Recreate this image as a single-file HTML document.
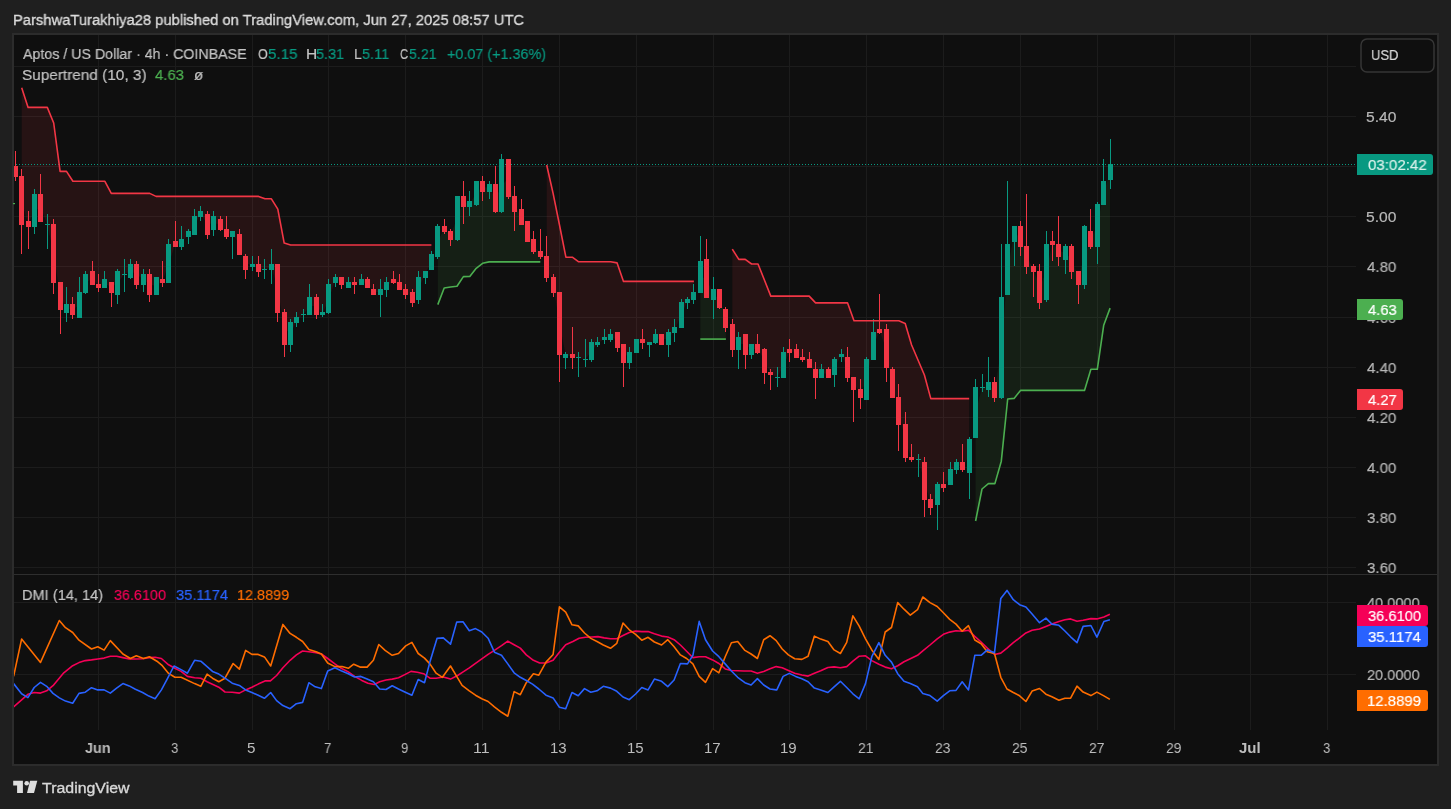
<!DOCTYPE html>
<html><head><meta charset="utf-8"><style>
*{margin:0;padding:0;box-sizing:border-box}
html,body{width:1451px;height:809px;overflow:hidden;background:#1f1f1f;font-family:"Liberation Sans",sans-serif}
.t{position:absolute;line-height:1;white-space:nowrap;transform-origin:0 0;will-change:transform}
.box{position:absolute;left:1357px;border-radius:0 3px 3px 0}
</style></head><body>
<svg width="1451" height="809" style="position:absolute;left:0;top:0">
<rect x="12" y="33" width="1427" height="733" fill="#2c2c2c"/>
<rect x="14" y="35" width="1423" height="729" fill="#0f0f0f"/>
<svg x="14" y="35" width="1342" height="695" viewBox="14 35 1342 695" overflow="hidden">
<rect x="14" y="66" width="1342" height="1" fill="#1c1c1c"/>
<rect x="14" y="116" width="1342" height="1" fill="#1c1c1c"/>
<rect x="14" y="166" width="1342" height="1" fill="#1c1c1c"/>
<rect x="14" y="216" width="1342" height="1" fill="#1c1c1c"/>
<rect x="14" y="266" width="1342" height="1" fill="#1c1c1c"/>
<rect x="14" y="317" width="1342" height="1" fill="#1c1c1c"/>
<rect x="14" y="367" width="1342" height="1" fill="#1c1c1c"/>
<rect x="14" y="417" width="1342" height="1" fill="#1c1c1c"/>
<rect x="14" y="467" width="1342" height="1" fill="#1c1c1c"/>
<rect x="14" y="517" width="1342" height="1" fill="#1c1c1c"/>
<rect x="14" y="567" width="1342" height="1" fill="#1c1c1c"/>
<rect x="14" y="602" width="1342" height="1" fill="#1c1c1c"/>
<rect x="14" y="674" width="1342" height="1" fill="#1c1c1c"/>
<rect x="98" y="35" width="1" height="695" fill="#1c1c1c"/>
<rect x="175" y="35" width="1" height="695" fill="#1c1c1c"/>
<rect x="252" y="35" width="1" height="695" fill="#1c1c1c"/>
<rect x="328" y="35" width="1" height="695" fill="#1c1c1c"/>
<rect x="405" y="35" width="1" height="695" fill="#1c1c1c"/>
<rect x="482" y="35" width="1" height="695" fill="#1c1c1c"/>
<rect x="559" y="35" width="1" height="695" fill="#1c1c1c"/>
<rect x="636" y="35" width="1" height="695" fill="#1c1c1c"/>
<rect x="713" y="35" width="1" height="695" fill="#1c1c1c"/>
<rect x="789" y="35" width="1" height="695" fill="#1c1c1c"/>
<rect x="866" y="35" width="1" height="695" fill="#1c1c1c"/>
<rect x="943" y="35" width="1" height="695" fill="#1c1c1c"/>
<rect x="1020" y="35" width="1" height="695" fill="#1c1c1c"/>
<rect x="1097" y="35" width="1" height="695" fill="#1c1c1c"/>
<rect x="1174" y="35" width="1" height="695" fill="#1c1c1c"/>
<rect x="1250" y="35" width="1" height="695" fill="#1c1c1c"/>
<rect x="1327" y="35" width="1" height="695" fill="#1c1c1c"/>
<polygon points="21.7,87.7 28.1,107.4 34.5,107.4 40.9,107.4 47.3,107.4 53.7,123.0 60.1,171.4 66.5,171.4 72.9,181.3 79.3,181.3 85.7,181.3 92.1,181.3 98.5,181.3 104.9,181.3 111.3,193.4 117.7,193.4 124.1,193.4 130.5,193.4 136.9,193.4 143.3,193.4 149.7,193.4 156.1,196.4 162.5,196.4 168.9,196.4 175.3,196.4 181.7,196.4 188.1,196.4 194.5,196.4 200.9,196.4 207.3,196.4 213.7,196.4 220.1,196.4 226.6,196.4 233.0,196.4 239.4,196.4 245.8,196.4 252.2,196.4 258.6,196.4 265.0,198.8 271.4,198.8 277.8,209.2 284.2,243.1 290.6,245.0 297.0,245.0 303.4,245.0 309.8,245.0 316.2,245.0 322.6,245.0 329.0,245.0 335.4,245.0 341.8,245.0 348.2,245.0 354.6,245.0 361.0,245.0 367.4,245.0 373.8,245.0 380.2,245.0 386.6,245.0 393.0,245.0 399.4,245.0 405.8,245.0 412.2,245.0 418.6,245.0 425.0,245.0 431.4,245.0 431.4,262.0 425.0,274.5 418.6,288.5 412.2,297.5 405.8,292.0 399.4,286.0 393.0,281.0 386.6,286.0 380.2,292.0 373.8,292.0 367.4,283.5 361.0,282.0 354.6,283.5 348.2,285.0 341.8,281.0 335.4,280.0 329.0,298.5 322.6,313.5 316.2,306.0 309.8,306.0 303.4,314.5 297.0,320.0 290.6,333.5 284.2,328.5 277.8,288.5 271.4,267.0 265.0,269.5 258.6,268.0 252.2,265.5 245.8,263.0 239.4,244.5 233.0,234.0 226.6,233.0 220.1,224.5 213.7,223.0 207.3,224.5 200.9,214.0 194.5,225.5 188.1,234.0 181.7,243.0 175.3,244.0 168.9,263.5 162.5,281.0 156.1,286.0 149.7,284.5 143.3,279.5 136.9,274.5 130.5,271.0 124.1,274.5 117.7,283.0 111.3,287.5 104.9,283.5 98.5,286.0 92.1,278.0 85.7,283.5 79.3,305.0 72.9,309.5 66.5,308.5 60.1,296.0 53.7,253.5 47.3,224.5 40.9,208.0 34.5,210.5 28.1,224.0 21.7,200.5" fill="rgba(242,54,69,0.10)"/>
<polygon points="437.8,304.6 444.2,288.0 450.6,287.0 457.0,286.2 463.4,276.6 469.8,276.4 476.2,268.3 482.6,263.3 489.1,261.9 495.5,261.9 501.9,261.9 508.3,261.9 514.7,261.9 521.1,261.9 527.5,261.9 533.9,261.9 540.3,261.9 540.3,254.0 533.9,245.5 527.5,231.5 521.1,217.0 514.7,204.0 508.3,178.0 501.9,185.5 495.5,198.0 489.1,188.0 482.6,186.5 476.2,193.0 469.8,204.0 463.4,201.5 457.0,218.0 450.6,235.5 444.2,229.0 437.8,241.5" fill="rgba(76,175,80,0.10)"/>
<polygon points="546.7,165.0 553.1,193.4 559.5,225.0 565.9,257.2 572.3,257.2 578.7,261.8 585.1,261.8 591.5,261.8 597.9,261.8 604.3,261.8 610.7,261.8 617.1,262.9 623.5,281.4 629.9,281.4 636.3,281.4 642.7,281.4 649.1,281.4 655.5,281.4 661.9,281.4 668.3,281.4 674.7,281.4 681.1,281.4 687.5,281.4 693.9,281.4 693.9,296.0 687.5,301.0 681.1,315.0 674.7,330.0 668.3,338.5 661.9,339.5 655.5,338.5 649.1,343.5 642.7,341.0 636.3,346.0 629.9,357.5 623.5,353.5 617.1,340.0 610.7,337.0 604.3,338.5 597.9,343.5 591.5,351.0 585.1,359.5 578.7,357.5 572.3,356.0 565.9,356.0 559.5,323.5 553.1,285.0 546.7,267.0" fill="rgba(242,54,69,0.10)"/>
<polygon points="700.3,339.1 706.7,339.1 713.1,339.1 719.5,339.1 725.9,339.1 725.9,318.5 719.5,298.5 713.1,294.5 706.7,278.5 700.3,277.0" fill="rgba(76,175,80,0.10)"/>
<polygon points="732.3,249.1 738.8,259.4 745.2,259.4 751.6,264.0 758.0,264.0 764.4,280.0 770.8,296.1 777.2,296.1 783.6,296.1 790.0,296.1 796.4,296.1 802.8,296.1 809.2,296.1 815.6,302.9 822.0,302.9 828.4,302.9 834.8,302.9 841.2,302.9 847.6,302.9 854.0,320.8 860.4,320.8 866.8,320.8 873.2,320.8 879.6,320.8 886.0,320.8 892.4,320.8 898.8,320.8 905.2,323.5 911.6,345.0 918.0,360.0 924.4,375.0 930.8,398.6 937.2,398.6 943.6,398.6 950.0,398.6 956.4,398.6 962.8,398.6 969.2,398.6 969.2,456.0 962.8,466.0 956.4,466.0 950.0,477.0 943.6,486.0 937.2,494.5 930.8,503.5 924.4,481.0 918.0,459.5 911.6,458.5 905.2,441.0 898.8,411.0 892.4,383.5 886.0,348.5 879.6,331.0 873.2,346.0 866.8,379.5 860.4,393.5 854.0,383.5 847.6,367.5 841.2,355.5 834.8,367.0 828.4,373.5 822.0,373.5 815.6,373.5 809.2,363.5 802.8,358.5 796.4,353.5 790.0,351.0 783.6,365.0 777.2,377.5 770.8,373.5 764.4,361.0 758.0,348.5 751.6,349.5 745.2,344.5 738.8,343.5 732.3,337.0" fill="rgba(242,54,69,0.10)"/>
<polygon points="975.6,521.0 982.0,489.0 988.4,483.6 994.9,483.6 1001.3,461.2 1007.7,399.0 1014.1,398.4 1020.5,390.4 1026.9,390.4 1033.3,390.4 1039.7,390.4 1046.1,390.4 1052.5,390.4 1058.9,390.4 1065.3,390.4 1071.7,390.4 1078.1,390.4 1084.5,390.4 1090.9,369.3 1097.3,369.3 1103.7,325.3 1110.1,308.1 1110.1,172.0 1103.7,193.0 1097.3,225.5 1090.9,239.0 1084.5,255.5 1078.1,278.0 1071.7,259.0 1065.3,253.0 1058.9,250.5 1052.5,243.0 1046.1,272.0 1039.7,287.0 1033.3,269.0 1026.9,256.5 1020.5,236.5 1014.1,234.0 1007.7,269.5 1001.3,347.5 994.9,390.0 988.4,386.0 982.0,387.5 975.6,412.5" fill="rgba(76,175,80,0.10)"/>
<defs><pattern id="dots" x="1" y="0" width="3" height="10" patternUnits="userSpaceOnUse"><rect x="0" y="0" width="1" height="10" fill="#089981"/></pattern></defs><rect x="14" y="164" width="1342" height="1" fill="url(#dots)"/>
<rect x="15" y="151" width="1" height="30" fill="#f23645"/>
<rect x="13" y="166" width="5" height="11" fill="#f23645"/>
<rect x="21" y="169" width="1" height="85" fill="#f23645"/>
<rect x="19" y="176" width="5" height="49" fill="#f23645"/>
<rect x="28" y="211" width="1" height="38" fill="#f23645"/>
<rect x="26" y="221" width="5" height="6" fill="#f23645"/>
<rect x="34" y="189" width="1" height="45" fill="#089981"/>
<rect x="32" y="194" width="5" height="33" fill="#089981"/>
<rect x="40" y="174" width="1" height="48" fill="#f23645"/>
<rect x="38" y="194" width="5" height="28" fill="#f23645"/>
<rect x="47" y="214" width="1" height="35" fill="#089981"/>
<rect x="45" y="224" width="5" height="1" fill="#089981"/>
<rect x="53" y="219" width="1" height="75" fill="#f23645"/>
<rect x="51" y="224" width="5" height="59" fill="#f23645"/>
<rect x="60" y="282" width="1" height="52" fill="#f23645"/>
<rect x="58" y="282" width="5" height="28" fill="#f23645"/>
<rect x="66" y="287" width="1" height="35" fill="#089981"/>
<rect x="64" y="304" width="5" height="9" fill="#089981"/>
<rect x="72" y="297" width="1" height="22" fill="#f23645"/>
<rect x="70" y="304" width="5" height="11" fill="#f23645"/>
<rect x="79" y="277" width="1" height="41" fill="#089981"/>
<rect x="77" y="292" width="5" height="26" fill="#089981"/>
<rect x="85" y="271" width="1" height="23" fill="#089981"/>
<rect x="83" y="274" width="5" height="19" fill="#089981"/>
<rect x="92" y="261" width="1" height="24" fill="#f23645"/>
<rect x="90" y="271" width="5" height="14" fill="#f23645"/>
<rect x="98" y="274" width="1" height="18" fill="#f23645"/>
<rect x="96" y="284" width="5" height="4" fill="#f23645"/>
<rect x="104" y="271" width="1" height="17" fill="#089981"/>
<rect x="102" y="279" width="5" height="9" fill="#089981"/>
<rect x="111" y="282" width="1" height="25" fill="#f23645"/>
<rect x="109" y="282" width="5" height="11" fill="#f23645"/>
<rect x="117" y="269" width="1" height="35" fill="#089981"/>
<rect x="115" y="271" width="5" height="24" fill="#089981"/>
<rect x="124" y="259" width="1" height="33" fill="#089981"/>
<rect x="122" y="274" width="5" height="1" fill="#089981"/>
<rect x="130" y="259" width="1" height="20" fill="#089981"/>
<rect x="128" y="264" width="5" height="14" fill="#089981"/>
<rect x="136" y="261" width="1" height="28" fill="#f23645"/>
<rect x="134" y="264" width="5" height="21" fill="#f23645"/>
<rect x="143" y="269" width="1" height="23" fill="#089981"/>
<rect x="141" y="274" width="5" height="11" fill="#089981"/>
<rect x="149" y="269" width="1" height="33" fill="#f23645"/>
<rect x="147" y="274" width="5" height="21" fill="#f23645"/>
<rect x="156" y="277" width="1" height="18" fill="#089981"/>
<rect x="154" y="277" width="5" height="18" fill="#089981"/>
<rect x="162" y="261" width="1" height="26" fill="#f23645"/>
<rect x="160" y="279" width="5" height="4" fill="#f23645"/>
<rect x="168" y="239" width="1" height="44" fill="#089981"/>
<rect x="166" y="244" width="5" height="39" fill="#089981"/>
<rect x="175" y="221" width="1" height="26" fill="#f23645"/>
<rect x="173" y="241" width="5" height="6" fill="#f23645"/>
<rect x="181" y="226" width="1" height="24" fill="#089981"/>
<rect x="179" y="239" width="5" height="8" fill="#089981"/>
<rect x="188" y="229" width="1" height="15" fill="#089981"/>
<rect x="186" y="231" width="5" height="6" fill="#089981"/>
<rect x="194" y="209" width="1" height="26" fill="#089981"/>
<rect x="192" y="216" width="5" height="19" fill="#089981"/>
<rect x="200" y="206" width="1" height="15" fill="#089981"/>
<rect x="198" y="211" width="5" height="6" fill="#089981"/>
<rect x="207" y="211" width="1" height="28" fill="#f23645"/>
<rect x="205" y="214" width="5" height="21" fill="#f23645"/>
<rect x="213" y="211" width="1" height="25" fill="#089981"/>
<rect x="211" y="216" width="5" height="14" fill="#089981"/>
<rect x="220" y="216" width="1" height="15" fill="#f23645"/>
<rect x="218" y="219" width="5" height="11" fill="#f23645"/>
<rect x="226" y="216" width="1" height="23" fill="#f23645"/>
<rect x="224" y="229" width="5" height="8" fill="#f23645"/>
<rect x="232" y="231" width="1" height="28" fill="#089981"/>
<rect x="230" y="231" width="5" height="6" fill="#089981"/>
<rect x="239" y="229" width="1" height="26" fill="#f23645"/>
<rect x="237" y="234" width="5" height="21" fill="#f23645"/>
<rect x="245" y="254" width="1" height="25" fill="#f23645"/>
<rect x="243" y="256" width="5" height="14" fill="#f23645"/>
<rect x="252" y="256" width="1" height="15" fill="#089981"/>
<rect x="250" y="264" width="5" height="3" fill="#089981"/>
<rect x="258" y="256" width="1" height="21" fill="#f23645"/>
<rect x="256" y="264" width="5" height="8" fill="#f23645"/>
<rect x="264" y="259" width="1" height="20" fill="#089981"/>
<rect x="262" y="269" width="5" height="1" fill="#089981"/>
<rect x="271" y="249" width="1" height="35" fill="#089981"/>
<rect x="269" y="264" width="5" height="6" fill="#089981"/>
<rect x="277" y="264" width="1" height="58" fill="#f23645"/>
<rect x="275" y="264" width="5" height="49" fill="#f23645"/>
<rect x="284" y="309" width="1" height="48" fill="#f23645"/>
<rect x="282" y="312" width="5" height="33" fill="#f23645"/>
<rect x="290" y="319" width="1" height="33" fill="#089981"/>
<rect x="288" y="322" width="5" height="23" fill="#089981"/>
<rect x="296" y="312" width="1" height="15" fill="#089981"/>
<rect x="294" y="317" width="5" height="6" fill="#089981"/>
<rect x="303" y="309" width="1" height="13" fill="#089981"/>
<rect x="301" y="314" width="5" height="1" fill="#089981"/>
<rect x="309" y="284" width="1" height="31" fill="#089981"/>
<rect x="307" y="297" width="5" height="18" fill="#089981"/>
<rect x="316" y="294" width="1" height="25" fill="#f23645"/>
<rect x="314" y="297" width="5" height="18" fill="#f23645"/>
<rect x="322" y="304" width="1" height="13" fill="#089981"/>
<rect x="320" y="312" width="5" height="3" fill="#089981"/>
<rect x="328" y="279" width="1" height="35" fill="#089981"/>
<rect x="326" y="284" width="5" height="29" fill="#089981"/>
<rect x="335" y="274" width="1" height="13" fill="#089981"/>
<rect x="333" y="277" width="5" height="6" fill="#089981"/>
<rect x="341" y="277" width="1" height="12" fill="#f23645"/>
<rect x="339" y="277" width="5" height="8" fill="#f23645"/>
<rect x="348" y="277" width="1" height="11" fill="#089981"/>
<rect x="346" y="282" width="5" height="6" fill="#089981"/>
<rect x="354" y="277" width="1" height="17" fill="#f23645"/>
<rect x="352" y="282" width="5" height="3" fill="#f23645"/>
<rect x="361" y="274" width="1" height="11" fill="#089981"/>
<rect x="359" y="279" width="5" height="6" fill="#089981"/>
<rect x="367" y="277" width="1" height="11" fill="#f23645"/>
<rect x="365" y="279" width="5" height="9" fill="#f23645"/>
<rect x="373" y="284" width="1" height="11" fill="#f23645"/>
<rect x="371" y="289" width="5" height="6" fill="#f23645"/>
<rect x="380" y="279" width="1" height="38" fill="#089981"/>
<rect x="378" y="289" width="5" height="6" fill="#089981"/>
<rect x="386" y="277" width="1" height="20" fill="#089981"/>
<rect x="384" y="282" width="5" height="8" fill="#089981"/>
<rect x="393" y="271" width="1" height="13" fill="#f23645"/>
<rect x="391" y="279" width="5" height="4" fill="#f23645"/>
<rect x="399" y="274" width="1" height="16" fill="#f23645"/>
<rect x="397" y="282" width="5" height="8" fill="#f23645"/>
<rect x="405" y="284" width="1" height="15" fill="#f23645"/>
<rect x="403" y="289" width="5" height="6" fill="#f23645"/>
<rect x="412" y="289" width="1" height="18" fill="#f23645"/>
<rect x="410" y="292" width="5" height="11" fill="#f23645"/>
<rect x="418" y="271" width="1" height="33" fill="#089981"/>
<rect x="416" y="277" width="5" height="23" fill="#089981"/>
<rect x="425" y="271" width="1" height="13" fill="#089981"/>
<rect x="423" y="271" width="5" height="7" fill="#089981"/>
<rect x="431" y="251" width="1" height="19" fill="#089981"/>
<rect x="429" y="254" width="5" height="16" fill="#089981"/>
<rect x="437" y="224" width="1" height="35" fill="#089981"/>
<rect x="435" y="226" width="5" height="31" fill="#089981"/>
<rect x="444" y="219" width="1" height="15" fill="#f23645"/>
<rect x="442" y="226" width="5" height="6" fill="#f23645"/>
<rect x="450" y="229" width="1" height="17" fill="#f23645"/>
<rect x="448" y="231" width="5" height="9" fill="#f23645"/>
<rect x="457" y="196" width="1" height="45" fill="#089981"/>
<rect x="455" y="196" width="5" height="44" fill="#089981"/>
<rect x="463" y="181" width="1" height="43" fill="#f23645"/>
<rect x="461" y="196" width="5" height="11" fill="#f23645"/>
<rect x="469" y="191" width="1" height="25" fill="#089981"/>
<rect x="467" y="201" width="5" height="6" fill="#089981"/>
<rect x="476" y="181" width="1" height="25" fill="#089981"/>
<rect x="474" y="181" width="5" height="24" fill="#089981"/>
<rect x="482" y="176" width="1" height="25" fill="#f23645"/>
<rect x="480" y="181" width="5" height="11" fill="#f23645"/>
<rect x="489" y="181" width="1" height="18" fill="#089981"/>
<rect x="487" y="184" width="5" height="8" fill="#089981"/>
<rect x="495" y="166" width="1" height="47" fill="#f23645"/>
<rect x="493" y="184" width="5" height="28" fill="#f23645"/>
<rect x="501" y="154" width="1" height="59" fill="#089981"/>
<rect x="499" y="159" width="5" height="53" fill="#089981"/>
<rect x="508" y="159" width="1" height="40" fill="#f23645"/>
<rect x="506" y="159" width="5" height="38" fill="#f23645"/>
<rect x="514" y="186" width="1" height="45" fill="#f23645"/>
<rect x="512" y="196" width="5" height="16" fill="#f23645"/>
<rect x="521" y="199" width="1" height="26" fill="#f23645"/>
<rect x="519" y="209" width="5" height="16" fill="#f23645"/>
<rect x="527" y="221" width="1" height="21" fill="#f23645"/>
<rect x="525" y="221" width="5" height="21" fill="#f23645"/>
<rect x="533" y="231" width="1" height="23" fill="#f23645"/>
<rect x="531" y="239" width="5" height="13" fill="#f23645"/>
<rect x="540" y="229" width="1" height="30" fill="#f23645"/>
<rect x="538" y="251" width="5" height="6" fill="#f23645"/>
<rect x="546" y="236" width="1" height="46" fill="#f23645"/>
<rect x="544" y="256" width="5" height="22" fill="#f23645"/>
<rect x="553" y="274" width="1" height="23" fill="#f23645"/>
<rect x="551" y="277" width="5" height="16" fill="#f23645"/>
<rect x="559" y="292" width="1" height="90" fill="#f23645"/>
<rect x="557" y="292" width="5" height="63" fill="#f23645"/>
<rect x="565" y="352" width="1" height="17" fill="#089981"/>
<rect x="563" y="354" width="5" height="4" fill="#089981"/>
<rect x="572" y="327" width="1" height="42" fill="#f23645"/>
<rect x="570" y="354" width="5" height="4" fill="#f23645"/>
<rect x="578" y="352" width="1" height="25" fill="#089981"/>
<rect x="576" y="357" width="5" height="1" fill="#089981"/>
<rect x="585" y="339" width="1" height="28" fill="#089981"/>
<rect x="583" y="359" width="5" height="1" fill="#089981"/>
<rect x="591" y="339" width="1" height="23" fill="#089981"/>
<rect x="589" y="342" width="5" height="18" fill="#089981"/>
<rect x="597" y="337" width="1" height="10" fill="#089981"/>
<rect x="595" y="342" width="5" height="3" fill="#089981"/>
<rect x="604" y="329" width="1" height="15" fill="#089981"/>
<rect x="602" y="337" width="5" height="3" fill="#089981"/>
<rect x="610" y="329" width="1" height="13" fill="#089981"/>
<rect x="608" y="334" width="5" height="6" fill="#089981"/>
<rect x="617" y="332" width="1" height="20" fill="#f23645"/>
<rect x="615" y="332" width="5" height="16" fill="#f23645"/>
<rect x="623" y="344" width="1" height="43" fill="#f23645"/>
<rect x="621" y="344" width="5" height="19" fill="#f23645"/>
<rect x="629" y="347" width="1" height="22" fill="#089981"/>
<rect x="627" y="352" width="5" height="11" fill="#089981"/>
<rect x="636" y="339" width="1" height="14" fill="#089981"/>
<rect x="634" y="339" width="5" height="14" fill="#089981"/>
<rect x="642" y="329" width="1" height="20" fill="#f23645"/>
<rect x="640" y="339" width="5" height="4" fill="#f23645"/>
<rect x="649" y="342" width="1" height="15" fill="#089981"/>
<rect x="647" y="342" width="5" height="3" fill="#089981"/>
<rect x="655" y="329" width="1" height="15" fill="#089981"/>
<rect x="653" y="334" width="5" height="9" fill="#089981"/>
<rect x="661" y="334" width="1" height="11" fill="#f23645"/>
<rect x="659" y="334" width="5" height="11" fill="#f23645"/>
<rect x="668" y="329" width="1" height="28" fill="#089981"/>
<rect x="666" y="332" width="5" height="13" fill="#089981"/>
<rect x="674" y="319" width="1" height="23" fill="#089981"/>
<rect x="672" y="327" width="5" height="6" fill="#089981"/>
<rect x="681" y="299" width="1" height="29" fill="#089981"/>
<rect x="679" y="302" width="5" height="26" fill="#089981"/>
<rect x="687" y="297" width="1" height="12" fill="#089981"/>
<rect x="685" y="299" width="5" height="4" fill="#089981"/>
<rect x="693" y="284" width="1" height="20" fill="#089981"/>
<rect x="691" y="292" width="5" height="8" fill="#089981"/>
<rect x="700" y="236" width="1" height="57" fill="#089981"/>
<rect x="698" y="261" width="5" height="32" fill="#089981"/>
<rect x="706" y="239" width="1" height="59" fill="#f23645"/>
<rect x="704" y="259" width="5" height="39" fill="#f23645"/>
<rect x="713" y="277" width="1" height="42" fill="#089981"/>
<rect x="711" y="289" width="5" height="11" fill="#089981"/>
<rect x="719" y="289" width="1" height="20" fill="#f23645"/>
<rect x="717" y="289" width="5" height="19" fill="#f23645"/>
<rect x="725" y="307" width="1" height="25" fill="#f23645"/>
<rect x="723" y="309" width="5" height="19" fill="#f23645"/>
<rect x="732" y="319" width="1" height="38" fill="#f23645"/>
<rect x="730" y="324" width="5" height="26" fill="#f23645"/>
<rect x="738" y="332" width="1" height="37" fill="#089981"/>
<rect x="736" y="337" width="5" height="13" fill="#089981"/>
<rect x="745" y="334" width="1" height="35" fill="#f23645"/>
<rect x="743" y="334" width="5" height="21" fill="#f23645"/>
<rect x="751" y="344" width="1" height="15" fill="#089981"/>
<rect x="749" y="344" width="5" height="11" fill="#089981"/>
<rect x="757" y="334" width="1" height="20" fill="#f23645"/>
<rect x="755" y="344" width="5" height="9" fill="#f23645"/>
<rect x="764" y="348" width="1" height="36" fill="#f23645"/>
<rect x="762" y="349" width="5" height="24" fill="#f23645"/>
<rect x="770" y="369" width="1" height="21" fill="#f23645"/>
<rect x="768" y="372" width="5" height="3" fill="#f23645"/>
<rect x="777" y="367" width="1" height="20" fill="#089981"/>
<rect x="775" y="377" width="5" height="1" fill="#089981"/>
<rect x="783" y="347" width="1" height="31" fill="#089981"/>
<rect x="781" y="352" width="5" height="26" fill="#089981"/>
<rect x="789" y="339" width="1" height="23" fill="#f23645"/>
<rect x="787" y="349" width="5" height="4" fill="#f23645"/>
<rect x="796" y="344" width="1" height="14" fill="#f23645"/>
<rect x="794" y="349" width="5" height="9" fill="#f23645"/>
<rect x="802" y="349" width="1" height="13" fill="#f23645"/>
<rect x="800" y="357" width="5" height="3" fill="#f23645"/>
<rect x="809" y="352" width="1" height="16" fill="#f23645"/>
<rect x="807" y="359" width="5" height="9" fill="#f23645"/>
<rect x="815" y="362" width="1" height="37" fill="#f23645"/>
<rect x="813" y="369" width="5" height="9" fill="#f23645"/>
<rect x="821" y="364" width="1" height="14" fill="#089981"/>
<rect x="819" y="369" width="5" height="9" fill="#089981"/>
<rect x="828" y="367" width="1" height="11" fill="#f23645"/>
<rect x="826" y="369" width="5" height="9" fill="#f23645"/>
<rect x="834" y="357" width="1" height="30" fill="#089981"/>
<rect x="832" y="359" width="5" height="16" fill="#089981"/>
<rect x="841" y="349" width="1" height="13" fill="#089981"/>
<rect x="839" y="354" width="5" height="3" fill="#089981"/>
<rect x="847" y="347" width="1" height="35" fill="#f23645"/>
<rect x="845" y="357" width="5" height="21" fill="#f23645"/>
<rect x="853" y="377" width="1" height="45" fill="#f23645"/>
<rect x="851" y="377" width="5" height="13" fill="#f23645"/>
<rect x="860" y="379" width="1" height="30" fill="#f23645"/>
<rect x="858" y="389" width="5" height="9" fill="#f23645"/>
<rect x="866" y="357" width="1" height="43" fill="#089981"/>
<rect x="864" y="359" width="5" height="41" fill="#089981"/>
<rect x="873" y="319" width="1" height="41" fill="#089981"/>
<rect x="871" y="332" width="5" height="28" fill="#089981"/>
<rect x="879" y="294" width="1" height="40" fill="#f23645"/>
<rect x="877" y="329" width="5" height="4" fill="#f23645"/>
<rect x="886" y="324" width="1" height="58" fill="#f23645"/>
<rect x="884" y="329" width="5" height="39" fill="#f23645"/>
<rect x="892" y="367" width="1" height="31" fill="#f23645"/>
<rect x="890" y="369" width="5" height="29" fill="#f23645"/>
<rect x="898" y="384" width="1" height="67" fill="#f23645"/>
<rect x="896" y="397" width="5" height="28" fill="#f23645"/>
<rect x="905" y="412" width="1" height="50" fill="#f23645"/>
<rect x="903" y="424" width="5" height="34" fill="#f23645"/>
<rect x="911" y="444" width="1" height="18" fill="#f23645"/>
<rect x="909" y="457" width="5" height="3" fill="#f23645"/>
<rect x="918" y="454" width="1" height="23" fill="#089981"/>
<rect x="916" y="459" width="5" height="1" fill="#089981"/>
<rect x="924" y="457" width="1" height="60" fill="#f23645"/>
<rect x="922" y="462" width="5" height="38" fill="#f23645"/>
<rect x="930" y="494" width="1" height="21" fill="#f23645"/>
<rect x="928" y="499" width="5" height="9" fill="#f23645"/>
<rect x="937" y="482" width="1" height="48" fill="#089981"/>
<rect x="935" y="484" width="5" height="21" fill="#089981"/>
<rect x="943" y="472" width="1" height="20" fill="#f23645"/>
<rect x="941" y="484" width="5" height="4" fill="#f23645"/>
<rect x="950" y="462" width="1" height="23" fill="#089981"/>
<rect x="948" y="469" width="5" height="16" fill="#089981"/>
<rect x="956" y="459" width="1" height="15" fill="#089981"/>
<rect x="954" y="462" width="5" height="8" fill="#089981"/>
<rect x="962" y="444" width="1" height="28" fill="#f23645"/>
<rect x="960" y="462" width="5" height="8" fill="#f23645"/>
<rect x="969" y="437" width="1" height="62" fill="#089981"/>
<rect x="967" y="439" width="5" height="34" fill="#089981"/>
<rect x="975" y="379" width="1" height="59" fill="#089981"/>
<rect x="973" y="387" width="5" height="51" fill="#089981"/>
<rect x="982" y="374" width="1" height="18" fill="#089981"/>
<rect x="980" y="387" width="5" height="1" fill="#089981"/>
<rect x="988" y="357" width="1" height="40" fill="#089981"/>
<rect x="986" y="382" width="5" height="8" fill="#089981"/>
<rect x="994" y="377" width="1" height="25" fill="#f23645"/>
<rect x="992" y="382" width="5" height="16" fill="#f23645"/>
<rect x="1001" y="244" width="1" height="155" fill="#089981"/>
<rect x="999" y="297" width="5" height="101" fill="#089981"/>
<rect x="1007" y="181" width="1" height="114" fill="#089981"/>
<rect x="1005" y="244" width="5" height="51" fill="#089981"/>
<rect x="1014" y="226" width="1" height="40" fill="#089981"/>
<rect x="1012" y="226" width="5" height="16" fill="#089981"/>
<rect x="1020" y="221" width="1" height="35" fill="#f23645"/>
<rect x="1018" y="226" width="5" height="21" fill="#f23645"/>
<rect x="1026" y="194" width="1" height="80" fill="#f23645"/>
<rect x="1024" y="246" width="5" height="21" fill="#f23645"/>
<rect x="1033" y="264" width="1" height="33" fill="#f23645"/>
<rect x="1031" y="266" width="5" height="6" fill="#f23645"/>
<rect x="1039" y="264" width="1" height="45" fill="#f23645"/>
<rect x="1037" y="271" width="5" height="32" fill="#f23645"/>
<rect x="1046" y="231" width="1" height="71" fill="#089981"/>
<rect x="1044" y="244" width="5" height="56" fill="#089981"/>
<rect x="1052" y="231" width="1" height="30" fill="#f23645"/>
<rect x="1050" y="241" width="5" height="4" fill="#f23645"/>
<rect x="1058" y="216" width="1" height="50" fill="#f23645"/>
<rect x="1056" y="244" width="5" height="13" fill="#f23645"/>
<rect x="1065" y="244" width="1" height="30" fill="#089981"/>
<rect x="1063" y="246" width="5" height="14" fill="#089981"/>
<rect x="1071" y="244" width="1" height="35" fill="#f23645"/>
<rect x="1069" y="246" width="5" height="26" fill="#f23645"/>
<rect x="1078" y="271" width="1" height="33" fill="#f23645"/>
<rect x="1076" y="271" width="5" height="14" fill="#f23645"/>
<rect x="1084" y="225" width="1" height="64" fill="#089981"/>
<rect x="1082" y="226" width="5" height="59" fill="#089981"/>
<rect x="1090" y="209" width="1" height="40" fill="#f23645"/>
<rect x="1088" y="231" width="5" height="16" fill="#f23645"/>
<rect x="1097" y="202" width="1" height="62" fill="#089981"/>
<rect x="1095" y="204" width="5" height="43" fill="#089981"/>
<rect x="1103" y="159" width="1" height="46" fill="#089981"/>
<rect x="1101" y="181" width="5" height="24" fill="#089981"/>
<rect x="1110" y="139" width="1" height="50" fill="#089981"/>
<rect x="1108" y="164" width="5" height="16" fill="#089981"/>
<polyline points="21.7,87.7 28.1,107.4 34.5,107.4 40.9,107.4 47.3,107.4 53.7,123.0 60.1,171.4 66.5,171.4 72.9,181.3 79.3,181.3 85.7,181.3 92.1,181.3 98.5,181.3 104.9,181.3 111.3,193.4 117.7,193.4 124.1,193.4 130.5,193.4 136.9,193.4 143.3,193.4 149.7,193.4 156.1,196.4 162.5,196.4 168.9,196.4 175.3,196.4 181.7,196.4 188.1,196.4 194.5,196.4 200.9,196.4 207.3,196.4 213.7,196.4 220.1,196.4 226.6,196.4 233.0,196.4 239.4,196.4 245.8,196.4 252.2,196.4 258.6,196.4 265.0,198.8 271.4,198.8 277.8,209.2 284.2,243.1 290.6,245.0 297.0,245.0 303.4,245.0 309.8,245.0 316.2,245.0 322.6,245.0 329.0,245.0 335.4,245.0 341.8,245.0 348.2,245.0 354.6,245.0 361.0,245.0 367.4,245.0 373.8,245.0 380.2,245.0 386.6,245.0 393.0,245.0 399.4,245.0 405.8,245.0 412.2,245.0 418.6,245.0 425.0,245.0 431.4,245.0" fill="none" stroke="#f23645" stroke-width="1.6" stroke-linejoin="round"/>
<polyline points="437.8,304.6 444.2,288.0 450.6,287.0 457.0,286.2 463.4,276.6 469.8,276.4 476.2,268.3 482.6,263.3 489.1,261.9 495.5,261.9 501.9,261.9 508.3,261.9 514.7,261.9 521.1,261.9 527.5,261.9 533.9,261.9 540.3,261.9" fill="none" stroke="#4caf50" stroke-width="1.6" stroke-linejoin="round"/>
<polyline points="546.7,165.0 553.1,193.4 559.5,225.0 565.9,257.2 572.3,257.2 578.7,261.8 585.1,261.8 591.5,261.8 597.9,261.8 604.3,261.8 610.7,261.8 617.1,262.9 623.5,281.4 629.9,281.4 636.3,281.4 642.7,281.4 649.1,281.4 655.5,281.4 661.9,281.4 668.3,281.4 674.7,281.4 681.1,281.4 687.5,281.4 693.9,281.4" fill="none" stroke="#f23645" stroke-width="1.6" stroke-linejoin="round"/>
<polyline points="700.3,339.1 706.7,339.1 713.1,339.1 719.5,339.1 725.9,339.1" fill="none" stroke="#4caf50" stroke-width="1.6" stroke-linejoin="round"/>
<polyline points="732.3,249.1 738.8,259.4 745.2,259.4 751.6,264.0 758.0,264.0 764.4,280.0 770.8,296.1 777.2,296.1 783.6,296.1 790.0,296.1 796.4,296.1 802.8,296.1 809.2,296.1 815.6,302.9 822.0,302.9 828.4,302.9 834.8,302.9 841.2,302.9 847.6,302.9 854.0,320.8 860.4,320.8 866.8,320.8 873.2,320.8 879.6,320.8 886.0,320.8 892.4,320.8 898.8,320.8 905.2,323.5 911.6,345.0 918.0,360.0 924.4,375.0 930.8,398.6 937.2,398.6 943.6,398.6 950.0,398.6 956.4,398.6 962.8,398.6 969.2,398.6" fill="none" stroke="#f23645" stroke-width="1.6" stroke-linejoin="round"/>
<polyline points="975.6,521.0 982.0,489.0 988.4,483.6 994.9,483.6 1001.3,461.2 1007.7,399.0 1014.1,398.4 1020.5,390.4 1026.9,390.4 1033.3,390.4 1039.7,390.4 1046.1,390.4 1052.5,390.4 1058.9,390.4 1065.3,390.4 1071.7,390.4 1078.1,390.4 1084.5,390.4 1090.9,369.3 1097.3,369.3 1103.7,325.3 1110.1,308.1" fill="none" stroke="#4caf50" stroke-width="1.6" stroke-linejoin="round"/>
<polyline points="13.6,706.9 27.9,694.3 34.2,692.5 40.5,693.1 46.7,690.8 53.0,685.7 63.8,672.8 72.7,665.7 79.0,662.6 85.3,660.6 91.5,659.9 97.8,659.0 104.1,658.1 110.3,656.3 116.6,656.3 122.9,657.6 129.2,659.0 135.4,659.0 142.6,658.8 148.9,657.6 155.1,657.2 161.4,658.5 168.6,664.8 174.9,668.3 181.1,671.4 187.4,676.4 194.6,677.8 200.8,678.2 207.1,681.8 218.8,687.2 225.0,692.0 232.2,692.2 239.4,693.1 245.6,689.9 251.9,687.2 258.2,684.1 264.4,681.3 265.0,680.9 270.4,680.9 276.6,675.5 282.9,667.8 290.1,660.3 296.4,654.9 302.6,651.0 308.9,651.7 316.1,652.8 321.4,654.0 327.7,658.5 334.9,663.9 341.2,668.3 348.3,671.9 354.6,676.4 361.8,680.4 368.0,683.2 374.3,684.5 379.7,681.8 386.0,680.0 392.2,679.1 398.5,677.8 404.8,674.6 411.0,671.4 417.3,672.3 423.6,673.7 429.9,678.2 436.1,678.2 443.3,677.0 450.5,679.1 457.6,675.5 463.9,671.4 469.3,667.8 475.5,663.3 481.8,658.8 488.1,654.4 494.4,650.4 501.5,645.6 507.8,641.1 514.1,644.7 520.3,648.1 526.3,654.9 533.4,660.3 539.7,663.0 546.0,663.0 553.1,660.3 559.4,652.2 565.7,644.7 572.9,641.5 579.1,638.2 585.4,637.3 591.7,637.0 597.9,636.6 604.2,637.9 610.5,638.8 616.8,638.8 623.0,635.5 629.3,632.5 635.6,631.1 641.8,631.6 648.1,631.6 654.4,633.8 661.6,636.1 667.8,637.0 674.1,639.7 680.4,645.0 686.6,651.3 692.9,657.6 699.2,656.7 705.5,656.7 712.6,659.9 718.9,663.5 725.2,668.9 731.4,670.5 737.7,670.7 744.0,671.0 751.1,671.0 757.4,673.2 763.7,671.4 770.0,668.7 776.2,666.6 782.2,667.8 788.4,670.5 794.7,673.2 801.9,675.0 808.1,676.1 814.4,673.2 820.7,670.7 827.9,667.5 834.1,666.9 840.4,667.8 846.7,666.6 852.9,661.2 859.2,656.2 865.5,655.8 871.8,660.6 878.9,664.2 885.2,667.1 891.5,668.7 897.7,665.7 904.0,661.7 910.3,658.8 917.5,655.3 922.8,650.8 930.0,645.0 937.2,638.8 943.4,634.3 949.7,632.1 956.0,630.7 962.2,631.2 968.5,630.3 974.8,636.4 981.1,642.0 987.3,648.1 994.5,654.5 1000.8,653.1 1007.0,648.1 1013.3,642.7 1019.6,637.9 1025.9,632.9 1032.1,630.2 1039.5,629.0 1045.9,626.4 1051.9,624.1 1058.9,621.5 1064.9,619.8 1070.6,618.9 1077.0,621.2 1083.1,620.3 1090.9,618.6 1096.9,618.9 1103.9,616.9 1109.9,614.3" fill="none" stroke="#f50057" stroke-width="1.6" stroke-linejoin="round"/>
<polyline points="13.6,676.4 21.6,639.1 40.5,662.4 59.3,620.5 65.5,627.7 72.7,632.5 79.0,640.2 91.5,649.0 97.8,646.8 104.1,650.1 110.3,640.6 122.9,654.0 130.4,658.5 136.3,655.8 143.5,658.5 149.4,656.7 156.9,661.2 162.3,665.7 168.6,673.4 174.9,677.3 181.1,677.3 194.6,683.6 200.8,686.3 207.1,674.1 212.5,678.2 218.8,681.8 225.0,678.2 233.1,663.5 239.4,669.2 245.6,650.4 251.9,654.4 258.2,654.4 264.4,657.1 265.0,657.6 270.7,666.0 282.9,624.4 290.1,633.4 296.4,637.3 302.6,641.5 308.9,649.5 316.1,651.7 321.4,654.0 327.7,663.0 334.9,666.6 342.0,666.6 348.3,668.3 353.7,664.2 360.0,667.1 367.1,667.1 373.4,660.3 378.8,644.5 385.1,650.4 392.2,655.3 398.5,653.5 405.7,645.9 411.9,642.4 418.2,653.5 424.5,658.1 429.9,663.9 436.1,673.2 442.4,677.3 450.5,666.0 456.7,676.4 462.1,685.4 469.3,690.8 475.5,695.2 481.8,698.8 488.1,701.5 494.4,706.9 501.5,712.3 507.8,716.2 514.1,691.6 520.3,694.7 526.3,682.7 533.4,673.7 538.8,675.2 546.0,662.1 553.1,654.5 559.4,606.9 565.7,612.2 572.0,624.8 578.2,625.9 584.5,633.0 590.8,638.4 597.0,641.5 603.3,645.0 610.5,648.3 616.8,643.3 623.0,623.0 629.3,629.8 635.6,634.3 641.8,640.2 648.1,637.3 654.4,642.0 661.6,645.0 667.8,639.7 674.1,646.8 680.4,654.9 686.6,658.5 692.9,663.9 699.2,676.4 705.5,682.3 712.6,668.7 718.9,672.8 725.2,656.7 731.4,642.7 737.7,641.5 744.9,650.4 751.1,654.0 757.4,658.5 763.7,639.7 770.0,635.7 776.2,640.6 782.2,649.0 788.4,654.9 794.7,658.8 801.9,659.4 808.1,656.3 814.4,636.1 820.7,639.1 827.9,641.5 834.1,649.9 840.4,653.5 846.7,642.4 852.9,615.8 859.2,626.2 865.5,638.8 871.8,649.9 878.9,659.4 885.2,632.0 891.5,627.5 897.7,602.6 904.0,609.2 910.3,615.1 917.5,609.7 922.8,597.0 930.0,602.6 937.2,606.5 943.4,612.8 949.7,619.4 956.0,624.1 962.2,631.2 968.5,625.7 974.8,640.0 981.1,643.8 987.3,651.7 994.5,653.5 1000.8,677.3 1007.0,689.0 1013.3,692.5 1019.6,695.8 1025.9,701.5 1032.1,691.1 1039.5,688.5 1045.9,694.2 1051.9,696.8 1058.9,700.3 1064.9,698.2 1070.6,698.2 1077.0,686.1 1083.1,692.1 1090.9,695.6 1096.9,692.1 1103.9,695.9 1109.9,699.4" fill="none" stroke="#ff6d00" stroke-width="1.6" stroke-linejoin="round"/>
<polyline points="13.6,683.6 21.6,693.8 27.9,697.6 34.2,687.5 40.5,682.3 46.7,686.3 53.0,693.4 59.3,697.9 65.5,701.1 72.7,703.3 79.0,693.4 85.3,692.2 91.5,687.7 97.8,689.9 104.1,689.9 110.3,693.1 116.6,688.1 122.9,683.6 129.2,685.9 135.4,689.3 142.6,692.5 148.9,696.1 155.1,698.8 161.4,689.9 167.7,678.2 174.0,666.0 181.1,669.6 187.4,673.2 194.6,660.3 200.8,661.2 207.1,666.6 212.5,671.4 218.8,674.1 225.0,678.2 232.2,683.2 239.4,685.4 245.6,689.9 251.9,692.5 258.2,695.2 264.4,698.3 265.0,697.9 270.7,692.5 276.6,700.6 282.9,705.6 290.1,708.7 296.4,703.7 302.6,702.4 308.9,682.7 315.2,686.8 321.4,688.6 327.7,671.0 334.9,667.8 341.2,670.7 348.3,673.7 354.6,677.0 360.9,676.4 367.1,679.1 373.4,681.8 379.7,689.0 386.0,689.5 392.2,685.7 398.5,689.0 404.8,692.0 411.9,695.2 418.2,679.5 424.5,682.7 429.9,662.1 437.0,638.4 443.3,637.9 450.5,644.2 456.7,622.1 463.0,621.7 469.3,630.7 475.5,628.6 481.8,632.0 488.1,638.2 494.4,652.2 501.5,655.3 507.8,663.9 514.1,672.8 520.3,677.3 526.3,680.5 532.5,684.1 538.8,689.0 546.0,695.2 553.1,697.9 559.4,707.2 565.7,708.7 572.0,692.5 578.2,695.8 584.5,688.6 590.8,692.2 597.0,690.8 603.3,686.3 610.5,688.1 616.8,691.3 623.0,697.0 629.3,699.7 635.6,694.0 641.8,687.5 648.1,689.9 654.4,679.1 661.6,681.3 667.8,686.6 674.1,680.0 680.4,663.5 687.5,663.9 692.9,655.4 699.2,621.4 705.5,639.7 712.6,651.0 718.9,656.7 725.2,663.9 731.4,671.0 737.7,677.3 744.9,682.7 751.1,685.0 757.4,678.6 763.7,685.0 770.0,689.0 776.2,689.9 776.8,689.9 783.1,676.4 789.3,673.4 795.6,676.4 801.9,678.7 808.1,681.8 814.4,688.1 820.7,689.9 827.9,692.5 834.1,686.8 840.4,681.3 846.7,687.5 852.9,693.8 859.2,698.8 865.5,683.6 871.8,656.7 878.9,642.7 885.2,655.3 891.5,662.1 897.7,673.7 904.0,681.3 910.3,683.6 917.5,686.8 922.8,693.4 930.0,695.6 937.2,701.1 943.4,695.6 949.7,690.8 956.0,690.4 962.2,681.8 968.5,689.9 974.8,655.3 981.1,655.3 987.3,649.9 994.5,652.8 1000.8,598.4 1007.0,590.4 1013.3,599.7 1019.6,604.7 1025.9,607.0 1032.1,614.0 1039.5,622.7 1045.9,618.1 1051.9,624.1 1058.9,625.3 1064.9,631.0 1070.6,636.8 1077.0,642.6 1083.1,626.4 1090.9,625.5 1096.9,637.1 1103.9,621.5 1109.9,619.8" fill="none" stroke="#2962ff" stroke-width="1.6" stroke-linejoin="round"/>
</svg>
<rect x="14" y="574" width="1423" height="1" fill="#2e2e2e"/>
<rect x="13" y="203" width="2" height="1.2" fill="#4caf50"/>
<rect x="1361" y="39" width="73" height="33" rx="6" fill="none" stroke="#363636" stroke-width="1.5"/>
<path d="M13.2 780.8H22.9V793H17.1V785.4H13.2Z" fill="#dedede"/>
<circle cx="26.7" cy="783.2" r="2.3" fill="#dedede"/>
<path d="M30.1 780.8H37.3L34 793H27Z" fill="#dedede"/>
</svg>
<div class="t" style="left:12.85px;top:11.80px;font-size:15.5px;font-weight:400;color:#dcdcdc;transform:scaleX(0.9521);-webkit-text-stroke:0.35px currentColor;">ParshwaTurakhiya28 published on TradingView.com, Jun 27, 2025 08:57 UTC</div>
<div class="t" style="left:23.20px;top:46.00px;font-size:15.5px;font-weight:400;color:#c4c4c4;transform:scaleX(0.9172);-webkit-text-stroke:0.2px currentColor;">Aptos / US Dollar · 4h · COINBASE</div>
<div class="t" style="left:258.20px;top:46.00px;font-size:15.5px;font-weight:400;color:#c4c4c4;transform:scaleX(0.8083);-webkit-text-stroke:0.2px currentColor;">O</div>
<div class="t" style="left:267.72px;top:46.00px;font-size:15.5px;font-weight:400;color:#089981;transform:scaleX(0.9793);-webkit-text-stroke:0.2px currentColor;">5.15</div>
<div class="t" style="left:305.82px;top:46.00px;font-size:15.5px;font-weight:400;color:#c4c4c4;transform:scaleX(0.9778);-webkit-text-stroke:0.2px currentColor;">H</div>
<div class="t" style="left:315.77px;top:46.00px;font-size:15.5px;font-weight:400;color:#089981;transform:scaleX(0.9310);-webkit-text-stroke:0.2px currentColor;">5.31</div>
<div class="t" style="left:354.00px;top:46.00px;font-size:15.5px;font-weight:400;color:#c4c4c4;transform:scaleX(0.9000);-webkit-text-stroke:0.2px currentColor;">L</div>
<div class="t" style="left:361.76px;top:46.00px;font-size:15.5px;font-weight:400;color:#089981;transform:scaleX(0.9357);-webkit-text-stroke:0.2px currentColor;">5.11</div>
<div class="t" style="left:400.40px;top:46.00px;font-size:15.5px;font-weight:400;color:#c4c4c4;transform:scaleX(0.7273);-webkit-text-stroke:0.2px currentColor;">C</div>
<div class="t" style="left:408.89px;top:46.00px;font-size:15.5px;font-weight:400;color:#089981;transform:scaleX(0.9138);-webkit-text-stroke:0.2px currentColor;">5.21</div>
<div class="t" style="left:447.30px;top:46.00px;font-size:15.5px;font-weight:400;color:#089981;transform:scaleX(0.9264);-webkit-text-stroke:0.2px currentColor;">+0.07 (+1.36%)</div>
<div class="t" style="left:22.21px;top:67.00px;font-size:15.5px;font-weight:400;color:#c4c4c4;transform:scaleX(0.9895);-webkit-text-stroke:0.2px currentColor;">Supertrend (10, 3)</div>
<div class="t" style="left:155.30px;top:67.00px;font-size:15.5px;font-weight:400;color:#4caf50;transform:scaleX(0.9600);-webkit-text-stroke:0.2px currentColor;">4.63</div>
<div class="t" style="left:194.40px;top:67.00px;font-size:15.5px;font-weight:400;color:#c4c4c4;transform:scaleX(0.9667);-webkit-text-stroke:0.2px currentColor;">ø</div>
<div class="t" style="left:22.43px;top:587.00px;font-size:15px;font-weight:400;color:#c4c4c4;transform:scaleX(0.9732);-webkit-text-stroke:0.2px currentColor;">DMI (14, 14)</div>
<div class="t" style="left:113.80px;top:587.00px;font-size:15px;font-weight:400;color:#f50057;transform:scaleX(0.9574);-webkit-text-stroke:0.2px currentColor;">36.6100</div>
<div class="t" style="left:175.50px;top:587.00px;font-size:15px;font-weight:400;color:#2962ff;transform:scaleX(0.9811);-webkit-text-stroke:0.2px currentColor;">35.1174</div>
<div class="t" style="left:236.84px;top:587.00px;font-size:15px;font-weight:400;color:#ff6d00;transform:scaleX(0.9623);-webkit-text-stroke:0.2px currentColor;">12.8899</div>
<div class="t" style="left:1371.26px;top:47.30px;font-size:15.5px;font-weight:400;color:#d8d8d8;transform:scaleX(0.8387);-webkit-text-stroke:0.2px currentColor;">USD</div>
<div class="t" style="left:41.70px;top:780.00px;font-size:15.5px;font-weight:400;color:#d8d8d8;transform:scaleX(1.0267);-webkit-text-stroke:0.35px currentColor;">TradingView</div>
<div class="t" style="left:1365.99px;top:108.60px;font-size:15.5px;font-weight:400;color:#b8b8b8;transform:scaleX(1.0069);-webkit-text-stroke:0.2px currentColor;">5.40</div>
<div class="t" style="left:1365.99px;top:208.60px;font-size:15.5px;font-weight:400;color:#b8b8b8;transform:scaleX(1.0069);-webkit-text-stroke:0.2px currentColor;">5.00</div>
<div class="t" style="left:1367.00px;top:258.60px;font-size:15.5px;font-weight:400;color:#b8b8b8;transform:scaleX(0.9733);-webkit-text-stroke:0.2px currentColor;">4.80</div>
<div class="t" style="left:1367.00px;top:309.60px;font-size:15.5px;font-weight:400;color:#b8b8b8;transform:scaleX(0.9733);-webkit-text-stroke:0.2px currentColor;">4.60</div>
<div class="t" style="left:1367.00px;top:359.60px;font-size:15.5px;font-weight:400;color:#b8b8b8;transform:scaleX(0.9733);-webkit-text-stroke:0.2px currentColor;">4.40</div>
<div class="t" style="left:1367.00px;top:409.60px;font-size:15.5px;font-weight:400;color:#b8b8b8;transform:scaleX(0.9733);-webkit-text-stroke:0.2px currentColor;">4.20</div>
<div class="t" style="left:1367.00px;top:459.60px;font-size:15.5px;font-weight:400;color:#b8b8b8;transform:scaleX(0.9733);-webkit-text-stroke:0.2px currentColor;">4.00</div>
<div class="t" style="left:1367.00px;top:509.60px;font-size:15.5px;font-weight:400;color:#b8b8b8;transform:scaleX(0.9733);-webkit-text-stroke:0.2px currentColor;">3.80</div>
<div class="t" style="left:1367.00px;top:559.60px;font-size:15.5px;font-weight:400;color:#b8b8b8;transform:scaleX(0.9733);-webkit-text-stroke:0.2px currentColor;">3.60</div>
<div class="t" style="left:1367.00px;top:594.60px;font-size:15.5px;font-weight:400;color:#b8b8b8;transform:scaleX(0.9393);-webkit-text-stroke:0.2px currentColor;">40.0000</div>
<div class="t" style="left:1367.00px;top:666.60px;font-size:15.5px;font-weight:400;color:#b8b8b8;transform:scaleX(0.9393);-webkit-text-stroke:0.2px currentColor;">20.0000</div>
<div class="t" style="left:85.20px;top:739.80px;font-size:15px;font-weight:700;color:#bdbdbd;transform:scaleX(0.9615);">Jun</div>
<div class="t" style="left:171.15px;top:739.80px;font-size:15px;font-weight:400;color:#bdbdbd;transform:scaleX(0.8875);">3</div>
<div class="t" style="left:247.14px;top:739.80px;font-size:15px;font-weight:400;color:#bdbdbd;transform:scaleX(1.0143);">5</div>
<div class="t" style="left:324.15px;top:739.80px;font-size:15px;font-weight:400;color:#bdbdbd;transform:scaleX(0.8875);">7</div>
<div class="t" style="left:401.15px;top:739.80px;font-size:15px;font-weight:400;color:#bdbdbd;transform:scaleX(0.8875);">9</div>
<div class="t" style="left:473.19px;top:739.80px;font-size:15px;font-weight:400;color:#bdbdbd;transform:scaleX(1.0643);">11</div>
<div class="t" style="left:550.26px;top:739.80px;font-size:15px;font-weight:400;color:#bdbdbd;transform:scaleX(0.9933);">13</div>
<div class="t" style="left:627.26px;top:739.80px;font-size:15px;font-weight:400;color:#bdbdbd;transform:scaleX(0.9933);">15</div>
<div class="t" style="left:704.26px;top:739.80px;font-size:15px;font-weight:400;color:#bdbdbd;transform:scaleX(0.9933);">17</div>
<div class="t" style="left:780.26px;top:739.80px;font-size:15px;font-weight:400;color:#bdbdbd;transform:scaleX(0.9933);">19</div>
<div class="t" style="left:858.25px;top:739.80px;font-size:15px;font-weight:400;color:#bdbdbd;transform:scaleX(0.9313);">21</div>
<div class="t" style="left:935.25px;top:739.80px;font-size:15px;font-weight:400;color:#bdbdbd;transform:scaleX(0.9313);">23</div>
<div class="t" style="left:1012.25px;top:739.80px;font-size:15px;font-weight:400;color:#bdbdbd;transform:scaleX(0.9313);">25</div>
<div class="t" style="left:1089.25px;top:739.80px;font-size:15px;font-weight:400;color:#bdbdbd;transform:scaleX(0.9313);">27</div>
<div class="t" style="left:1166.25px;top:739.80px;font-size:15px;font-weight:400;color:#bdbdbd;transform:scaleX(0.9313);">29</div>
<div class="t" style="left:1239.35px;top:739.80px;font-size:15px;font-weight:700;color:#bdbdbd;transform:scaleX(0.9857);">Jul</div>
<div class="t" style="left:1323.15px;top:739.80px;font-size:15px;font-weight:400;color:#bdbdbd;transform:scaleX(0.8875);">3</div>
<div class="box" style="top:154px;width:76px;height:21px;background:#089981"></div>
<div class="box" style="top:299px;width:46px;height:20.5px;background:#4caf50"></div>
<div class="box" style="top:389px;width:46px;height:20.5px;background:#f23645"></div>
<div class="box" style="top:605px;width:71px;height:21px;background:#f50057"></div>
<div class="box" style="top:626px;width:71px;height:21px;background:#2962ff"></div>
<div class="box" style="top:690px;width:71px;height:21px;background:#ff6d00"></div>
<div class="t" style="left:1368.00px;top:157.00px;font-size:15.5px;font-weight:400;color:#d8f0ea;transform:scaleX(0.9733);-webkit-text-stroke:0.2px currentColor;">03:02:42</div>
<div class="t" style="left:1368.00px;top:301.90px;font-size:15.5px;font-weight:400;color:#ffffff;transform:scaleX(0.9533);-webkit-text-stroke:0.2px currentColor;">4.63</div>
<div class="t" style="left:1368.00px;top:391.90px;font-size:15.5px;font-weight:400;color:#ffffff;transform:scaleX(0.9533);-webkit-text-stroke:0.2px currentColor;">4.27</div>
<div class="t" style="left:1368.00px;top:608.20px;font-size:15.5px;font-weight:400;color:#ffffff;transform:scaleX(0.9464);-webkit-text-stroke:0.2px currentColor;">36.6100</div>
<div class="t" style="left:1368.00px;top:629.00px;font-size:15.5px;font-weight:400;color:#ffffff;transform:scaleX(0.9636);-webkit-text-stroke:0.2px currentColor;">35.1174</div>
<div class="t" style="left:1367.04px;top:693.00px;font-size:15.5px;font-weight:400;color:#ffffff;transform:scaleX(0.9636);-webkit-text-stroke:0.2px currentColor;">12.8899</div>
</body></html>
